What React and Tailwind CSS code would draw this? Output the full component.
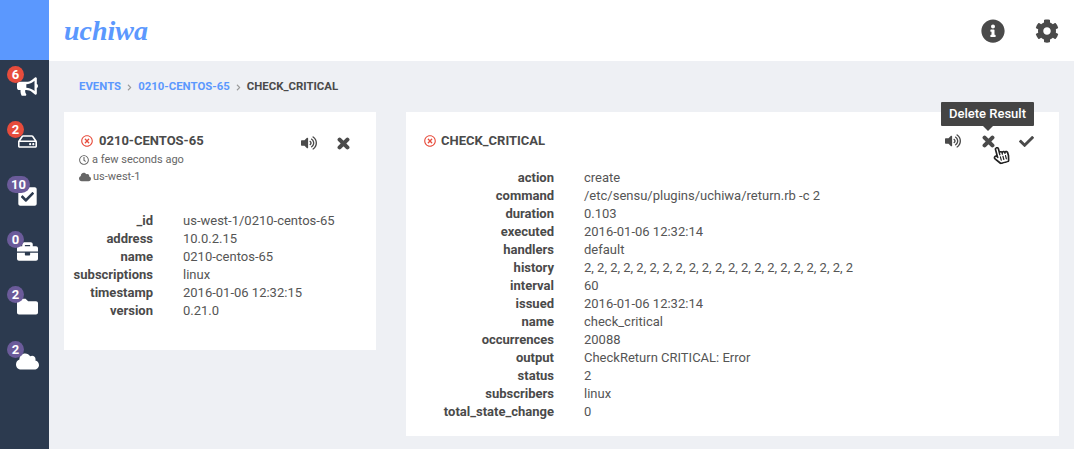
import {
  FaBullhorn, FaRegHdd, FaCheckSquare, FaBriefcase, FaFolder, FaCloud, FaInfoCircle, FaCog,
  FaVolumeUp, FaCheck, FaRegClock, FaRegTimesCircle, FaRegHandPointer, FaChevronRight,
} from 'react-icons/fa';

const NAV = [
  { Icon: FaBullhorn, count: '6', badge: 'bg-[#e74c3c]', size: 'text-[21px]' },
  { Icon: FaRegHdd, count: '2', badge: 'bg-[#e74c3c]', size: 'text-[19px]' },
  { Icon: FaCheckSquare, count: '10', badge: 'bg-[#6b5b9a]', size: 'text-[21px]' },
  { Icon: FaBriefcase, count: '0', badge: 'bg-[#6b5b9a]', size: 'text-[21px]' },
  { Icon: FaFolder, count: '2', badge: 'bg-[#6b5b9a]', size: 'text-[21px]' },
  { Icon: FaCloud, count: '2', badge: 'bg-[#6b5b9a]', size: 'text-[23px]' },
];

const CLIENT = [
  ['_id', 'us-west-1/0210-centos-65'],
  ['address', '10.0.2.15'],
  ['name', '0210-centos-65'],
  ['subscriptions', 'linux'],
  ['timestamp', '2016-01-06 12:32:15'],
  ['version', '0.21.0'],
];

const CHECK = [
  ['action', 'create'],
  ['command', '/etc/sensu/plugins/uchiwa/return.rb -c 2'],
  ['duration', '0.103'],
  ['executed', '2016-01-06 12:32:14'],
  ['handlers', 'default'],
  ['history', '2, 2, 2, 2, 2, 2, 2, 2, 2, 2, 2, 2, 2, 2, 2, 2, 2, 2, 2, 2, 2'],
  ['interval', '60'],
  ['issued', '2016-01-06 12:32:14'],
  ['name', 'check_critical'],
  ['occurrences', '20088'],
  ['output', 'CheckReturn CRITICAL: Error'],
  ['status', '2'],
  ['subscribers', 'linux'],
  ['total_state_change', '0'],
];

// chunky cross, the icon set's own is too thin at this size
function Cross({ className }) {
  return (
    <svg viewBox="0 0 14 14" className={className} fill="none" stroke="currentColor" strokeWidth="4.4" strokeLinecap="round">
      <path d="M2.8 2.8 11.2 11.2M11.2 2.8 2.8 11.2" />
    </svg>
  );
}

function Rows({ rows, labelWidth, gap }) {
  return (
    <div className="flex flex-col text-[13px] leading-[18px] text-[#555]">
      {rows.map(([label, value]) => (
        <div key={label} className="flex">
          <div className={`${labelWidth} ${gap} text-right font-bold text-[#4a4a4a]`}>{label}</div>
          <div>{value}</div>
        </div>
      ))}
    </div>
  );
}

export default function App() {
  return (
    <div className="flex h-[449px] w-[1074px] overflow-hidden bg-[#eef0f4] font-['Roboto',sans-serif] text-[#4a4a4a]">
      <aside className="flex w-[49px] flex-col bg-[#2c3a4f]">
        <div className="h-[60px] bg-[#5b98fe]" />
        {NAV.map(({ Icon, count, badge, size }) => (
          <div key={count + badge + size} className="relative flex h-[55px] items-center justify-center pb-[3px] pl-[5px] text-white">
            <Icon className={size} />
            <span className={`absolute left-[7px] top-[6px] flex h-[17px] min-w-[17px] items-center justify-center rounded-full px-[4px] text-[13px] font-bold leading-none ${badge}`}>
              {count}
            </span>
          </div>
        ))}
      </aside>

      <main className="flex flex-1 flex-col">
        <header className="flex h-[61px] items-center justify-between bg-white pl-[15px] pr-[15px]">
          <div className="font-['Liberation_Serif',serif] text-[28px] font-bold italic leading-none text-[#5b98fe]">uchiwa</div>
          <div className="flex items-center gap-[30px] text-[#4a4a4a]">
            <FaInfoCircle className="text-[24px]" />
            <FaCog className="text-[24px]" />
          </div>
        </header>

        <nav className="flex h-[51px] items-center gap-[5px] pl-[30px] pt-[1px] text-[11.4px] font-bold">
          <span className="text-[#5b98fe]">EVENTS</span>
          <FaChevronRight className="text-[7px] text-[#999]" />
          <span className="text-[#5b98fe]">0210-CENTOS-65</span>
          <FaChevronRight className="text-[7px] text-[#999]" />
          <span>CHECK_CRITICAL</span>
        </nav>

        <div className="flex items-start gap-[30px] pl-[15px]">
          <section className="h-[238px] w-[312px] bg-white pt-[20px]">
            <div className="flex items-start pl-[15px]">
              <div className="w-[222px]">
                <div className="flex items-center gap-[6px] pl-[2px] text-[13px] font-bold leading-[18px]">
                  <FaRegTimesCircle className="text-[12px] text-[#e74c3c]" />
                  0210-CENTOS-65
                </div>
                <div className="mt-[2px] flex items-center gap-[3px] text-[11px] leading-[16px] text-[#666]">
                  <FaRegClock className="text-[10px]" /> a few seconds ago
                </div>
                <div className="mt-[1px] flex items-center gap-[2px] text-[11px] leading-[16px] text-[#666]">
                  <FaCloud className="text-[12px]" /> us-west-1
                </div>
              </div>
              <div className="flex items-center gap-[20px] pt-[3px]">
                <FaVolumeUp className="text-[16px]" />
                <Cross className="h-[13px] w-[13px]" />
              </div>
            </div>
            <div className="mt-[27px]">
              <Rows rows={CLIENT} labelWidth="w-[89px]" gap="mr-[30px]" />
            </div>
          </section>

          <section className="relative h-[324px] w-[653px] bg-white pt-[20px]">
            <div className="flex items-center pl-[18px] pr-[25px]">
              <div className="flex flex-1 items-center gap-[5px] text-[13px] font-bold leading-[18px]">
                <FaRegTimesCircle className="text-[12px] text-[#e74c3c]" />
                CHECK_CRITICAL
              </div>
              <div className="flex items-center gap-[21px]">
                <FaVolumeUp className="text-[16px]" />
                <Cross className="mr-[3px] h-[13px] w-[13px]" />
                <FaCheck className="text-[15px]" />
              </div>
            </div>
            <div className="mt-[19px]">
              <Rows rows={CHECK} labelWidth="w-[148px]" gap="mr-[30px]" />
            </div>

            <div className="absolute left-[535px] top-[-10px] flex h-[24px] w-[93px] items-center justify-center rounded-[1px] bg-[#444] text-[13px] font-medium text-white">
              Delete Result
              <span className="absolute top-full left-1/2 -ml-[5px] border-x-[5px] border-t-[5px] border-x-transparent border-t-[#444]" />
            </div>
            <FaRegHandPointer className="absolute left-[586px] top-[34px] rotate-[-15deg] text-[18px] text-[#222]" />
          </section>
        </div>
      </main>
    </div>
  );
}
